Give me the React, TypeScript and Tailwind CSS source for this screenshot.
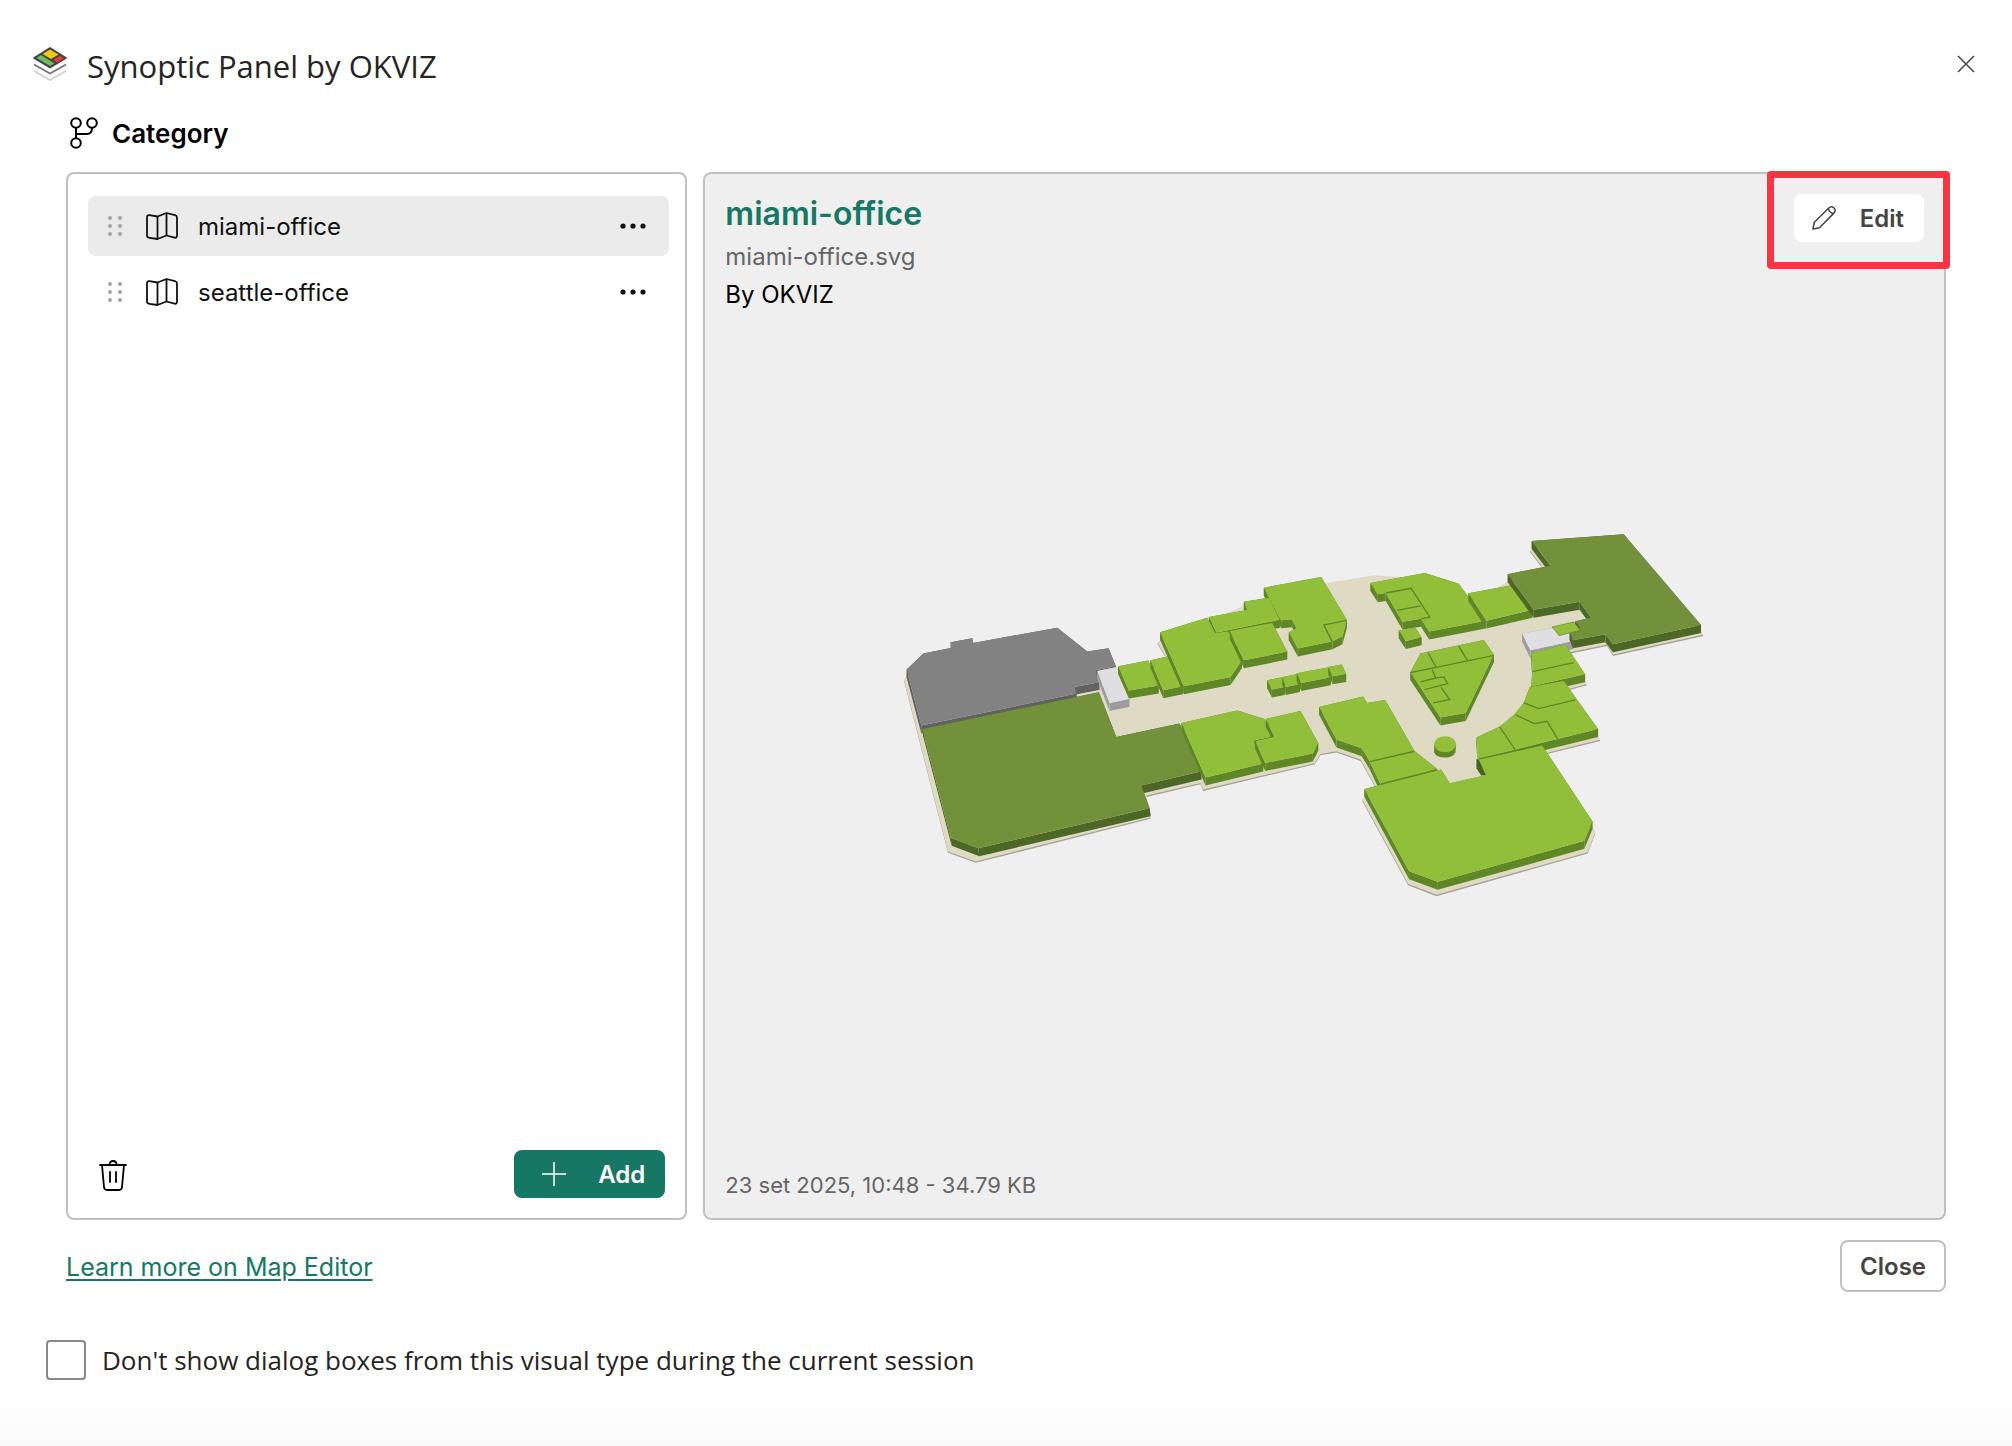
import { useState } from 'react';

type Point = [number, number];

type OfficeFile = {
  id: string;
  name: string;
  file: string;
  author: string;
  info: string;
};

const maps: OfficeFile[] = [
  {
    id: 'miami',
    name: 'miami-office',
    file: 'miami-office.svg',
    author: 'By OKVIZ',
    info: '23 set 2025, 10:48 - 34.79 KB',
  },
  {
    id: 'seattle',
    name: 'seattle-office',
    file: 'seattle-office.svg',
    author: 'By OKVIZ',
    info: '23 set 2025, 10:48 - 34.79 KB',
  },
];

const parse = (points: string): Point[] =>
  points.split(' ').map((p) => p.split(',').map(Number) as Point);

const palette = {
  room: { top: '#92bf3a', side: '#5f8726' },
  hall: { top: '#72913a', side: '#4d6726' },
  closed: { top: '#828282', side: '#626262' },
  stairs: { top: '#dfdfe1', side: '#9d9da1' },
};

// Extruded room: the side walls first, then the roof on top of them
function Block({
  points,
  kind = 'room',
  shift = 0,
}: {
  points: string;
  kind?: keyof typeof palette;
  shift?: number;
}) {
  const list = parse(points);
  const { top, side } = palette[kind];
  return (
    <g>
      {list.map(([x1, y1], i) => {
        const [x2, y2] = list[(i + 1) % list.length];
        return (
          <polygon
            key={i}
            fill={side}
            points={`${x1},${y1} ${x2},${y2} ${x2 + shift},${y2 + 24} ${x1 + shift},${y1 + 24}`}
          />
        );
      })}
      <polygon fill={top} points={points} />
    </g>
  );
}

const floor =
  '40,360 172,876 255,906 780,774 768,708 930,670 938,690 1272,611 1290,583 1338,575 1410,600 1455,680 1415,720 1553,973 1638,1006 2092,878 2115,818 2100,790 1955,583 2130,540 2110,510 2010,395 2090,373 2070,350 2020,282 2150,255 2168,285 2440,225 2210,-40 1930,-40 1918,-28 1955,20 1845,70 1740,130 1650,60 1450,47 1310,70 1125,112 960,180 800,248 825,290 680,330 600,300 500,230 60,330';

function OfficeMap() {
  return (
    <svg viewBox="40 -77 2404 1090" className="w-[801px] max-w-full" role="img" aria-label="miami-office map">
      <polygon points={floor} fill="#a5a294" transform="translate(0 4)" />
      <polygon points={floor} fill="#dfdac4" />
      <Block kind="closed" points="48,330 98,282 180,265 180,248 245,236 248,250 500,204 590,276 654,266 676,320 614,332 626,368 552,382 558,402 92,498" />
      <polygon points="626,391 560,404 558,409 626,399" fill="#dfdac4" />
      <Block kind="stairs" points="620,334 678,322 716,418 657,430" />
      <Block kind="hall" shift={3} points="95,508 625,398 677,532 867,492 930,636 752,678 777,746 263,866 180,835" />
      <Block points="683,320 773,303 804,378 715,393" />
      <Block points="780,302 835,290 877,380 818,392" />
      <g transform="translate(1050 -120)">
        <Block points="70,204 242,172 319,301 306,350 276,365 172,387 145,338 168,326 155,299 122,302" />
        <path d="M318 302L250 316L275 366" fill="none" stroke="#5f8726" strokeWidth="4" />
      </g>
      <Block points="955,172 1070,151 1060,126 1135,114 1168,180 978,219" />
      <Block points="809,218 950,174 974,220 1014,216 1054,302 1020,352 880,380" />
      <Block points="1018,214 1145,190 1190,276 1060,302" />
      <Block points="873,490 1040,453 1122,478 1148,530 1088,543 1118,612 945,654" />
      <g transform="translate(1050 -120)">
        <Block points="76,598 180,574 233,670 217,702 74,730 44,664 102,652" />
        <Block points="80,482 124,473 133,502 94,510" />
        <Block points="126,472 168,464 178,493 136,502" />
        <Block points="169,461 262,444 271,473 182,490" />
        <Block points="264,442 304,435 317,463 276,470" />
        <Block points="390,190 553,160 655,192 736,303 566,336 542,297 486,306 436,220 412,224" />
        <path d="M436 220L512 206L568 292L542 298M470 272L540 259" fill="none" stroke="#5f8726" strokeWidth="4" />
        <Block points="475,333 525,324 543,353 496,364" />
        <Block points="684,221 818,196 876,270 738,303" />
        <Block kind="stairs" points="845,342 935,325 1000,330 998,364 870,392" />
        <Block kind="hall" points="874,64 1150,44 1382,316 1118,374 1095,344 998,362 988,338 1020,325 1005,305 1052,294 1018,246 880,270 802,164 930,138" />
        <polygon points="935,322 1000,307 1020,332 956,348" fill="#92bf3a" stroke="#5f8726" strokeWidth="2" />
        <Block points="872,400 975,375 1034,464 872,500 876,455" />
        <Block points="868,502 970,484 1073,628 712,718 708,654 780,620 822,585 850,550" />
        <Block points="510,458 540,402 730,361 760,405 676,580 600,594" />
        <g fill="none" stroke="#5f8726" strokeWidth="4">
          <path d="M876 456L1000 429M850 549L895 567L1005 541M826 586L882 612L920 605L953 660M778 622L824 690" />
          <path d="M562 398L586 442M655 380L682 424M510 459L758 408" />
          <path d="M575 450L586 475L540 487M586 475L610 472L622 492L552 510M602 503L628 540L578 550" />
        </g>
        <Block points="236,562 368,531 380,550 434,541 522,694 590,748 420,794 388,726 364,686 288,660" />
        <path d="M388 726L522 695" stroke="#5f8726" strokeWidth="4" />
        <Block points="372,808 602,750 628,790 735,766 714,720 905,677 1056,905 1032,964 592,1087 506,1055" />
        <path d="M420 794L588 751M716 718L905 676" stroke="#5f8726" strokeWidth="4" />
        <path d="M604 750L628 790L735 766L708 722L690 700L590 700z" fill="#dfdac4" />
        <path d="M708 718v28l14 22l14-2l-20-44z" fill="#47651f" />
        <path d="M581 674v24a33 21 0 0 0 64 0l2-24z" fill="#5f8726" />
        <ellipse cx="614" cy="674" rx="33" ry="24" fill="#92bf3a" />
      </g>
    </svg>
  );
}

function Logo() {
  return (
    <svg viewBox="0 0 34 34" className="size-[34px]" fill="none" strokeLinejoin="round">
      <path d="M1 24l16 9 16-9" stroke="#d0d0d0" strokeWidth="2" />
      <path d="M1 17.500l16 9 16-9" stroke="#777" strokeWidth="2" />
      <path d="M17 1L33 11 17 20.500 1 11z" fill="#444" stroke="#444" strokeWidth="1.500" />
      <path d="M17 2.500L25.500 7.500 18 12 9.500 7z" fill="#f2c811" />
      <path d="M8 8L21.500 16.500 17 19 3.500 11z" fill="#6abf5e" />
      <path d="M27 9L31 11.500 24 15.500 20.500 13z" fill="#ee3a3a" />
    </svg>
  );
}

function BranchIcon() {
  return (
    <svg viewBox="0 0 28 32" className="h-8 w-7" fill="none" stroke="currentColor" strokeWidth="2">
      <circle cx="6" cy="6" r="4.800" />
      <circle cx="22" cy="6" r="4.800" />
      <circle cx="6" cy="26" r="4.800" />
      <path d="M6 11v10M22 11c0 4-2 6-5 6H6" />
    </svg>
  );
}

function GripIcon() {
  return (
    <svg viewBox="0 0 16 20" className="h-5 w-4" fill="#a3a3a3">
      {[2, 10, 18].map((y) => (
        <g key={y}>
          <circle cx="3" cy={y} r="2" />
          <circle cx="13" cy={y} r="2" />
        </g>
      ))}
    </svg>
  );
}

function MapIcon() {
  return (
    <svg viewBox="0 0 32 28" className="h-7 w-8" fill="none" stroke="currentColor" strokeWidth="1.800" strokeLinejoin="round">
      <path d="M1 5.500C1 3.500 2 3 3.500 3.200L11.500 4.500L20.500 1L29 3.200C30.500 3.600 31 4.200 31 5.500V23.500C31 25.500 30 26 28.500 25.600L20.500 23.500L11.500 27L3.500 25.800C1.600 25.500 1 25 1 23.500z" />
      <path d="M11.500 4.500V27M20.500 1V23.500" />
    </svg>
  );
}

function PencilIcon() {
  return (
    <svg viewBox="0 0 24 24" className="size-6" fill="none" stroke="currentColor" strokeWidth="1.500" strokeLinejoin="round">
      <path d="M1 23L2.200 16.500L16.500 2.300C18.500 .4 20.500 .5 22 2C23.500 3.500 23.500 5.500 21.700 7.400L7.400 21.700z" />
      <path d="M16.500 2.500C17 5.500 18.500 7 21.500 7.500" />
    </svg>
  );
}

function TrashIcon() {
  return (
    <svg viewBox="0 0 28 31" className="h-[31px] w-7" fill="none" stroke="currentColor" strokeWidth="1.800" strokeLinecap="round" strokeLinejoin="round">
      <path d="M1 5H27M10.500 4.500C10.500 2.500 12 1 14 1S17.500 2.500 17.500 4.500M3 5L5 27C5.200 29 6 30 8 30H20C22 30 22.800 29 23 27L25 5M11 12V22M17 12V22" />
    </svg>
  );
}

export default function App() {
  const [selected, setSelected] = useState('miami');
  const current = maps.find((m) => m.id === selected) ?? maps[0];

  return (
    <div className="flex min-h-screen flex-col bg-white bg-[linear-gradient(to_top,#fafafa,#ffffff_50px)] font-['Inter','Liberation_Sans',sans-serif] text-black">
      <header className="flex items-center justify-between pt-[42px] pr-[38px] pl-[33px]">
        <div className="flex items-center gap-5">
          <Logo />
          <h1 className="pt-1 font-['Open_Sans','Noto_Sans',sans-serif] text-[31px] leading-10 text-[#252423]">
            Synoptic Panel by OKVIZ
          </h1>
        </div>
        <button type="button" aria-label="Close dialog" className="text-[#444]">
          <svg viewBox="0 0 16 16" className="size-4 overflow-visible" stroke="currentColor" strokeWidth="1.500">
            <path d="M0 0L16 16M16 0L0 16" />
          </svg>
        </button>
      </header>

      <main className="px-[66px]">
        <div className="flex h-[86px] items-center gap-[14px] pt-2 pl-1">
          <BranchIcon />
          <h2 className="text-[26px] font-semibold">Category</h2>
        </div>

        <div className="grid h-[1048px] grid-cols-[1fr_2fr] gap-4">
          <section className="flex flex-col justify-between rounded-lg border-2 border-[#c0c0c0] py-5 pr-4 pl-5">
            <ul className="flex flex-col gap-[6px] pt-[2px]">
              {maps.map((map) => (
                <li
                  key={map.id}
                  className={`flex h-[60px] items-center rounded-lg pr-[23px] pl-[19px] ${map.id === selected ? 'bg-[#ebebeb]' : ''}`}
                >
                  <GripIcon />
                  <button
                    type="button"
                    onClick={() => setSelected(map.id)}
                    className="flex flex-1 items-center gap-5 pl-[23px] text-left text-2xl text-[#111]"
                  >
                    <MapIcon />
                    <span className="pt-[2px]">{map.name}</span>
                  </button>
                  <button type="button" aria-label={`${map.name} options`}>
                    <svg viewBox="0 0 26 6" className="h-[6px] w-[26px]" fill="#111">
                      <circle cx="3" cy="3" r="2.600" />
                      <circle cx="13" cy="3" r="2.600" />
                      <circle cx="23" cy="3" r="2.600" />
                    </svg>
                  </button>
                </li>
              ))}
            </ul>
            <div className="flex items-center justify-between pr-1 pl-[11px]">
              <button type="button" aria-label="Delete" className="pt-[2px]">
                <TrashIcon />
              </button>
              <button
                type="button"
                className="flex h-12 items-center gap-8 rounded-lg bg-[#167864] pr-5 pl-7 text-2xl font-semibold text-white"
              >
                <svg viewBox="0 0 24 24" className="size-6" stroke="currentColor" strokeWidth="1.500">
                  <path d="M12 0V24M0 12H24" />
                </svg>
                <span className="pt-[2px]">Add</span>
              </button>
            </div>
          </section>

          <section className="relative flex flex-col rounded-lg border-2 border-[#c0c0c0] bg-[#efefef] p-5">
            <div className="flex items-start justify-between">
              <div>
                <h3 className="text-[32px] leading-10 font-semibold text-[#167864]">{current.name}</h3>
                <p className="pt-[5px] text-2xl leading-9 text-[#666]">{current.file}</p>
                <p className="text-2xl leading-10">{current.author}</p>
              </div>
              <button
                type="button"
                className="flex h-12 items-center gap-6 rounded-lg bg-white pr-5 pl-[18px] text-2xl font-semibold text-[#444]"
              >
                <PencilIcon />
                <span className="pt-[2px]">Edit</span>
              </button>
            </div>
            <div className="flex flex-1 items-center justify-center pr-10 pb-[55px]">
              <OfficeMap />
            </div>
            <p className="text-[22px] leading-[26px] text-[#666]">{current.info}</p>
            <div className="pointer-events-none absolute -top-[3px] -right-[6px] h-[98px] w-[183px] rounded-[4px] border-[7px] border-[#fa3442]" />
          </section>
        </div>

        <div className="flex items-center justify-between pt-5">
          <a href="#learn" className="pt-[3px] text-[25px] text-[#167864] underline decoration-2 underline-offset-3">
            Learn more on Map Editor
          </a>
          <button
            type="button"
            onClick={() => setSelected('miami')}
            className="h-[52px] rounded-lg border-2 border-[#c0c0c0] bg-white px-[18px] pt-[2px] text-2xl font-semibold text-[#444]"
          >
            Close
          </button>
        </div>
      </main>

      <label className="flex items-center gap-4 pt-12 pl-[46px] font-['Open_Sans','Noto_Sans',sans-serif] text-[26px] leading-10 text-[#252423]">
        <input type="checkbox" className="size-10 appearance-none rounded-[4px] border-2 border-[#8a8886] bg-white" />
        Don't show dialog boxes from this visual type during the current session
      </label>
    </div>
  );
}
